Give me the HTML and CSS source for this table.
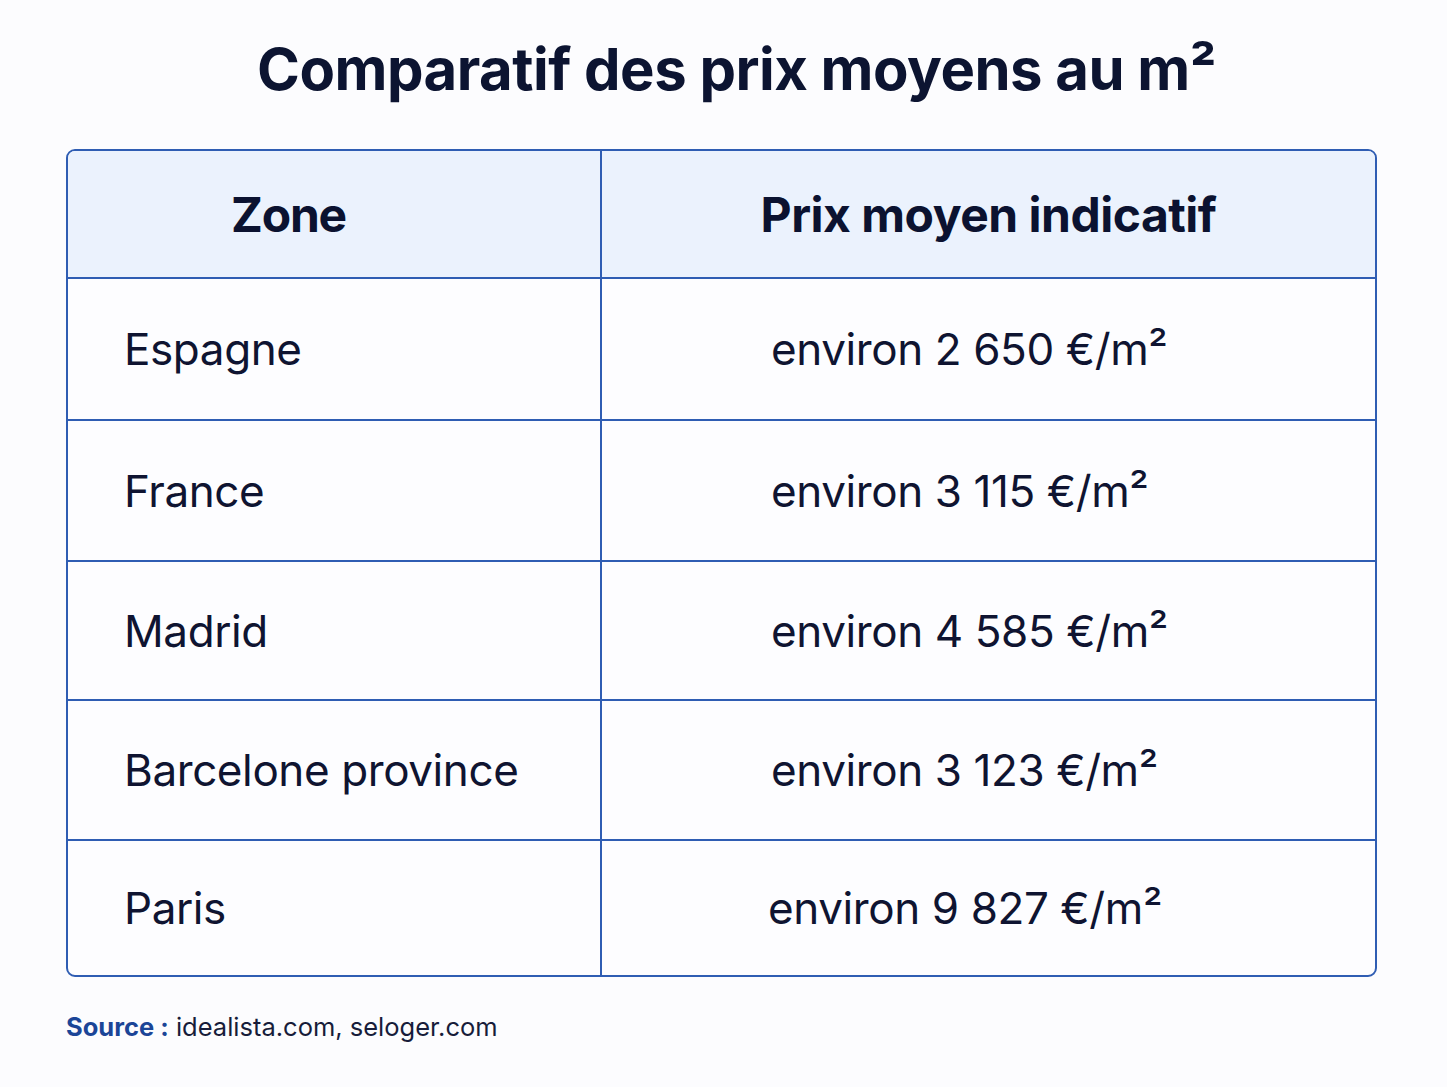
FILE: index.html
```html
<!DOCTYPE html>
<html lang="fr">
<head>
<meta charset="utf-8">
<title>Comparatif des prix moyens au m²</title>
<link rel="stylesheet" href="styles.css">
</head>
<body>
<main class="page">
  <h1 class="title">Comparatif des prix moyens au m²</h1>
  <table class="prices">
    <colgroup>
      <col class="c1">
      <col class="c2">
    </colgroup>
    <thead>
      <tr>
        <th class="col-zone">Zone</th>
        <th class="col-price">Prix moyen indicatif</th>
      </tr>
    </thead>
    <tbody>
      <tr class="r1"><td class="zone">Espagne</td><td class="price">environ 2 650 €/m²</td></tr>
      <tr class="r2"><td class="zone">France</td><td class="price">environ 3 115 €/m²</td></tr>
      <tr class="r3"><td class="zone">Madrid</td><td class="price">environ 4 585 €/m²</td></tr>
      <tr class="r4"><td class="zone">Barcelone province</td><td class="price">environ 3 123 €/m²</td></tr>
      <tr class="last"><td class="zone">Paris</td><td class="price price-paris">environ 9 827 €/m²</td></tr>
    </tbody>
  </table>
  <p class="source"><strong>Source :</strong> idealista.com, seloger.com</p>
</main>
</body>
</html>
```

FILE: styles.css
```css
html, body {
  margin: 0;
  padding: 0;
  background: #fcfcfe;
}

body {
  font-family: Inter, "Noto Sans", "Liberation Sans", sans-serif;
  color: #0e1430;
}

.page {
  width: 1311px;
  margin: 0 auto 0 66px;
  padding-top: 30px;
}

.title {
  margin: 0;
  text-align: center;
  font-size: 58px;
  font-weight: 700;
  letter-spacing: -0.5px;
  line-height: 78px;
  color: #0c1431;
  padding-left: 30px;
}

.prices {
  margin-top: 41px;
  width: 100%;
  table-layout: fixed;
  border-collapse: separate;
  border-spacing: 0;
  border: 2px solid #2f5db3;
  border-radius: 9px;
  overflow: hidden;
  background: #fdfdff;
}

.c1 {
  width: 534px;
}

.prices th,
.prices td {
  padding: 0;
  border-bottom: 2px solid #2f5db3;
}

.prices th:first-child,
.prices td:first-child {
  border-right: 2px solid #2f5db3;
}

.prices th {
  background: #ebf2fd;
  height: 126px;
  font-size: 48px;
  font-weight: 700;
  letter-spacing: -0.5px;
  color: #0b1230;
}

.col-zone {
  text-align: left;
  padding-left: 163px !important;
  letter-spacing: -1.2px !important;
}

.col-price {
  text-align: center;
}

.prices td {
  font-size: 44px;
  font-weight: 400;
  letter-spacing: -0.4px;
  color: #0f1431;
}

.r1 td { height: 140px; }
.r2 td { height: 139px; }
.r3 td { height: 137px; }
.r4 td { height: 138px; }

.prices tr.last td {
  border-bottom: none;
  height: 134px;
}

.zone {
  padding-left: 56px !important;
}

.price {
  padding-left: 169px !important;
}

.price-paris {
  padding-left: 166px !important;
}

.source {
  margin: 34px 0 0;
  font-size: 25.5px;
  color: #171c3a;
}

.source strong {
  color: #1b4597;
  font-weight: 700;
}
```
